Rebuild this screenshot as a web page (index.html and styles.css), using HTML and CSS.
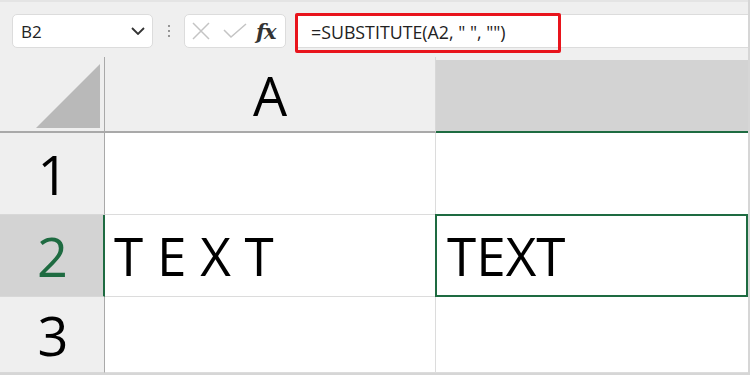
FILE: index.html
```html
<!DOCTYPE html>
<html>
<head>
<meta charset="utf-8">
<link rel="stylesheet" href="styles.css">
</head>
<body>
<div class="frame">
  <div class="toolbar">
    <div class="namebox">
      <span class="name">B2</span>
      <svg class="chev" width="14" height="8" viewBox="0 0 14 8"><path d="M1 1 L7 7 L13 1" fill="none" stroke="#333" stroke-width="1.8"/></svg>
    </div>
    <div class="dots"><span></span><span></span><span></span></div>
    <div class="iconbox">
      <svg width="18" height="18" viewBox="0 0 18 18"><path d="M1 1 L17 17 M17 1 L1 17" stroke="#c4c4c4" stroke-width="1.5" fill="none"/></svg>
      <svg width="24" height="16" viewBox="0 0 24 16"><path d="M1 7 L8 14 L23 1" stroke="#c4c4c4" stroke-width="1.5" fill="none"/></svg>
      <span class="fx">fx</span>
    </div>
    <div class="formula">
      <span class="formula-text">=SUBSTITUTE(A2, " ", "")</span>
    </div>
  </div>
  <div class="grid">
    <div class="corner"><div class="tri"></div></div>
    <div class="colhead">A</div>
    <div class="colhead sel">&nbsp;</div>

    <div class="rowhead">1</div>
    <div class="cell"></div>
    <div class="cell last"></div>

    <div class="rowhead sel">2</div>
    <div class="cell">T E X T</div>
    <div class="cell last active">TEXT</div>

    <div class="rowhead">3</div>
    <div class="cell"></div>
    <div class="cell last"></div>
  </div>
</div>
</body>
</html>
```
FILE: styles.css
```css
html, body {
  margin: 0;
  padding: 0;
  background: #ffffff;
}
.frame {
  width: 748px;
  height: 373px;
  border-right: 2px solid #d6d6d6;
  border-bottom: 2px solid #d6d6d6;
  display: flex;
  flex-direction: column;
  overflow: hidden;
  font-family: "Open Sans", "Noto Sans", sans-serif;
  color: #000;
}
.toolbar {
  height: 57px;
  box-sizing: border-box;
  background: #efefef;
  border-top: 2px solid #e4e4e4;
  padding: 12px 0 0 12px;
  display: flex;
  align-items: flex-start;
}
.namebox {
  width: 141px;
  height: 34px;
  box-sizing: border-box;
  background: #fff;
  border: 1px solid #dcdcdc;
  border-radius: 5px;
  display: flex;
  align-items: center;
  justify-content: space-between;
  padding: 0 7px 0 8px;
}
.name {
  font-size: 17px;
  color: #222;
}
.dots {
  width: 31px;
  height: 34px;
  display: flex;
  flex-direction: column;
  align-items: center;
  justify-content: center;
  gap: 3px;
}
.dots span {
  width: 2px;
  height: 2px;
  background: #777;
  border-radius: 1px;
}
.iconbox {
  width: 102px;
  height: 34px;
  box-sizing: border-box;
  background: #fff;
  border: 1px solid #dcdcdc;
  border-radius: 5px;
  display: flex;
  align-items: center;
  padding: 0 0 0 7px;
  gap: 13px;
}
.fx {
  font-family: "DejaVu Serif", "Liberation Serif", serif;
  font-style: italic;
  font-weight: bold;
  font-size: 21px;
  color: #333;
  margin-left: -4px;
  line-height: 1;
  letter-spacing: -1px;
}
.formula {
  flex: 1;
  margin-left: 9px;
  height: 34px;
  background: #fff;
  border-top: 1px solid #dcdcdc;
  border-bottom: 1px solid #dcdcdc;
  box-sizing: border-box;
  position: relative;
}
.formula-text {
  position: absolute;
  left: 0;
  top: -2px;
  width: 266px;
  height: 40px;
  box-sizing: border-box;
  border: 3px solid #e8141c;
  border-radius: 2px;
  padding-left: 13px;
  font-size: 17.8px;
  line-height: 33px;
  color: #222;
  white-space: pre;
}
.grid {
  display: grid;
  grid-template-columns: 105px 331px 1fr;
  grid-template-rows: 76px 82px 82px 1fr;
  flex: 1;
}
.corner {
  background: #efefef;
  border-right: 1px solid #a9a9a9;
  border-bottom: 2px solid #a9a9a9;
  position: relative;
}
.tri {
  position: absolute;
  right: 4px;
  bottom: 3px;
  width: 0;
  height: 0;
  border-left: 64px solid transparent;
  border-bottom: 64px solid #b9b9b9;
}
.colhead {
  background: #efefef;
  border-bottom: 2px solid #a9a9a9;
  border-right: 1px solid #d8d8d8;
  display: flex;
  align-items: center;
  justify-content: center;
  font-size: 54px;
  line-height: 1;
  padding-top: 2px;
  box-sizing: border-box;
}
.colhead.sel {
  background: #d3d3d3;
  border-top: 3px solid #efefef;
  border-bottom: 2px solid #1e6b41;
  border-right: none;
}
.rowhead {
  background: #efefef;
  border-right: 1px solid #a9a9a9;
  border-bottom: 1px solid #d8d8d8;
  display: flex;
  align-items: center;
  justify-content: center;
  font-size: 54px;
  line-height: 1;
  padding-left: 2px;
  box-sizing: border-box;
}
.rowhead.sel {
  background: #d3d3d3;
  color: #1e6b41;
  border-right: 2px solid #1e6b41;
}
.cell {
  border-right: 1px solid #dcdcdc;
  border-bottom: 1px solid #dcdcdc;
  display: flex;
  align-items: center;
  padding-left: 9px;
  font-size: 53px;
  line-height: 1;
  white-space: pre;
  box-sizing: border-box;
}
.cell.last {
  border-right: none;
}
.cell.active {
  border: 2px solid #1e6b41;
  margin: -1px 0 0 -1px;
  padding-left: 10px;
}
```
